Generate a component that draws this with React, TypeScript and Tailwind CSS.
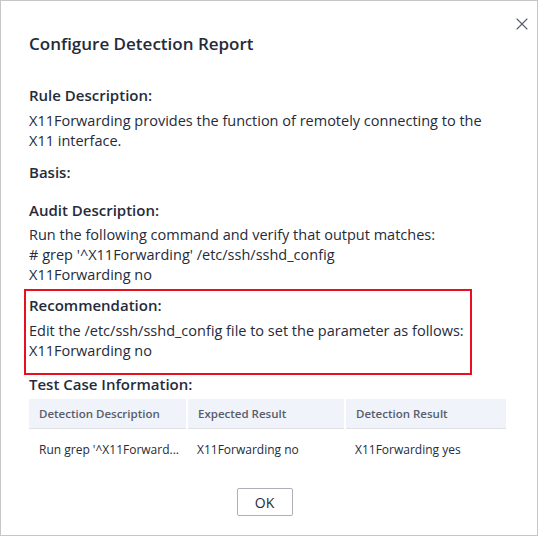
import { X } from 'lucide-react';

const rows = [
  {
    description: "Run grep '^X11Forward...",
    expected: 'X11Forwarding no',
    result: 'X11Forwarding yes',
  },
];

export default function App() {
  return (
    <div className="w-[538px] h-[536px] bg-white border border-[#c6c6c6] font-['Open_Sans',sans-serif] text-[#252b3a] relative">
      <button className="absolute right-[5px] top-[13px] text-[#575d6c]">
        <X size={20} strokeWidth={1.3} />
      </button>

      <div className="pl-[28px] pr-[37px] pt-[31px]">
        <h1 className="text-[17px] leading-[24px] font-semibold">
          Configure Detection Report
        </h1>

        <h2 className="mt-[28px] text-[15px] leading-[22px] font-semibold">
          Rule Description:
        </h2>
        <p className="mt-[5px] text-[14.5px] leading-[20px]">
          X11Forwarding provides the function of remotely connecting to the X11
          interface.
        </p>

        <h2 className="mt-[10px] text-[15px] leading-[22px] font-semibold">
          Basis:
        </h2>

        <h2 className="mt-[16px] text-[15px] leading-[22px] font-semibold">
          Audit Description:
        </h2>
        <p className="mt-[4px] text-[14.5px] leading-[20px]">
          Run the following command and verify that output matches:
          <br /># grep '^X11Forwarding' /etc/ssh/sshd_config
          <br />
          X11Forwarding no
        </p>

        <div className="relative mt-[9px]">
          <span className="absolute left-[-5px] top-[-5px] w-[448px] h-[86px] border-2 border-[#e8101f]" />
          <h2 className="text-[15px] leading-[22px] font-semibold">
            Recommendation:
          </h2>
          <p className="mt-[5px] text-[14.5px] leading-[20px]">
            Edit the /etc/ssh/sshd_config file to set the parameter as follows:
            <br />
            X11Forwarding no
          </p>
        </div>

        <h2 className="mt-[12px] text-[15px] leading-[22px] font-semibold">
          Test Case Information:
        </h2>

        <table className="mt-[4px] w-[477px] table-fixed text-[12px]">
          <thead>
            <tr className="bg-[#f0f3fa] h-[29px] border-b border-[#dfe1e6]">
              <th className="w-[158px] text-left text-[11.5px] font-semibold text-[#575d6c] px-[10px] border-r-2 border-white">
                Detection Description
              </th>
              <th className="w-[158px] text-left text-[11.5px] font-semibold text-[#575d6c] px-[10px] border-r-2 border-white">
                Expected Result
              </th>
              <th className="text-left text-[11.5px] font-semibold text-[#575d6c] px-[10px]">
                Detection Result
              </th>
            </tr>
          </thead>
          <tbody>
            {rows.map((row, idx) => (
              <tr key={idx} className="h-[44px]">
                <td className="px-[10px] whitespace-nowrap">{row.description}</td>
                <td className="px-[10px] whitespace-nowrap">{row.expected}</td>
                <td className="px-[10px] whitespace-nowrap">{row.result}</td>
              </tr>
            ))}
          </tbody>
        </table>

        <div className="mt-[16px] flex justify-center">
          <button className="w-[56px] h-[28px] border border-[#adb0b8] rounded-[2px] text-[14px] text-[#252b3a]">
            OK
          </button>
        </div>
      </div>
    </div>
  );
}
